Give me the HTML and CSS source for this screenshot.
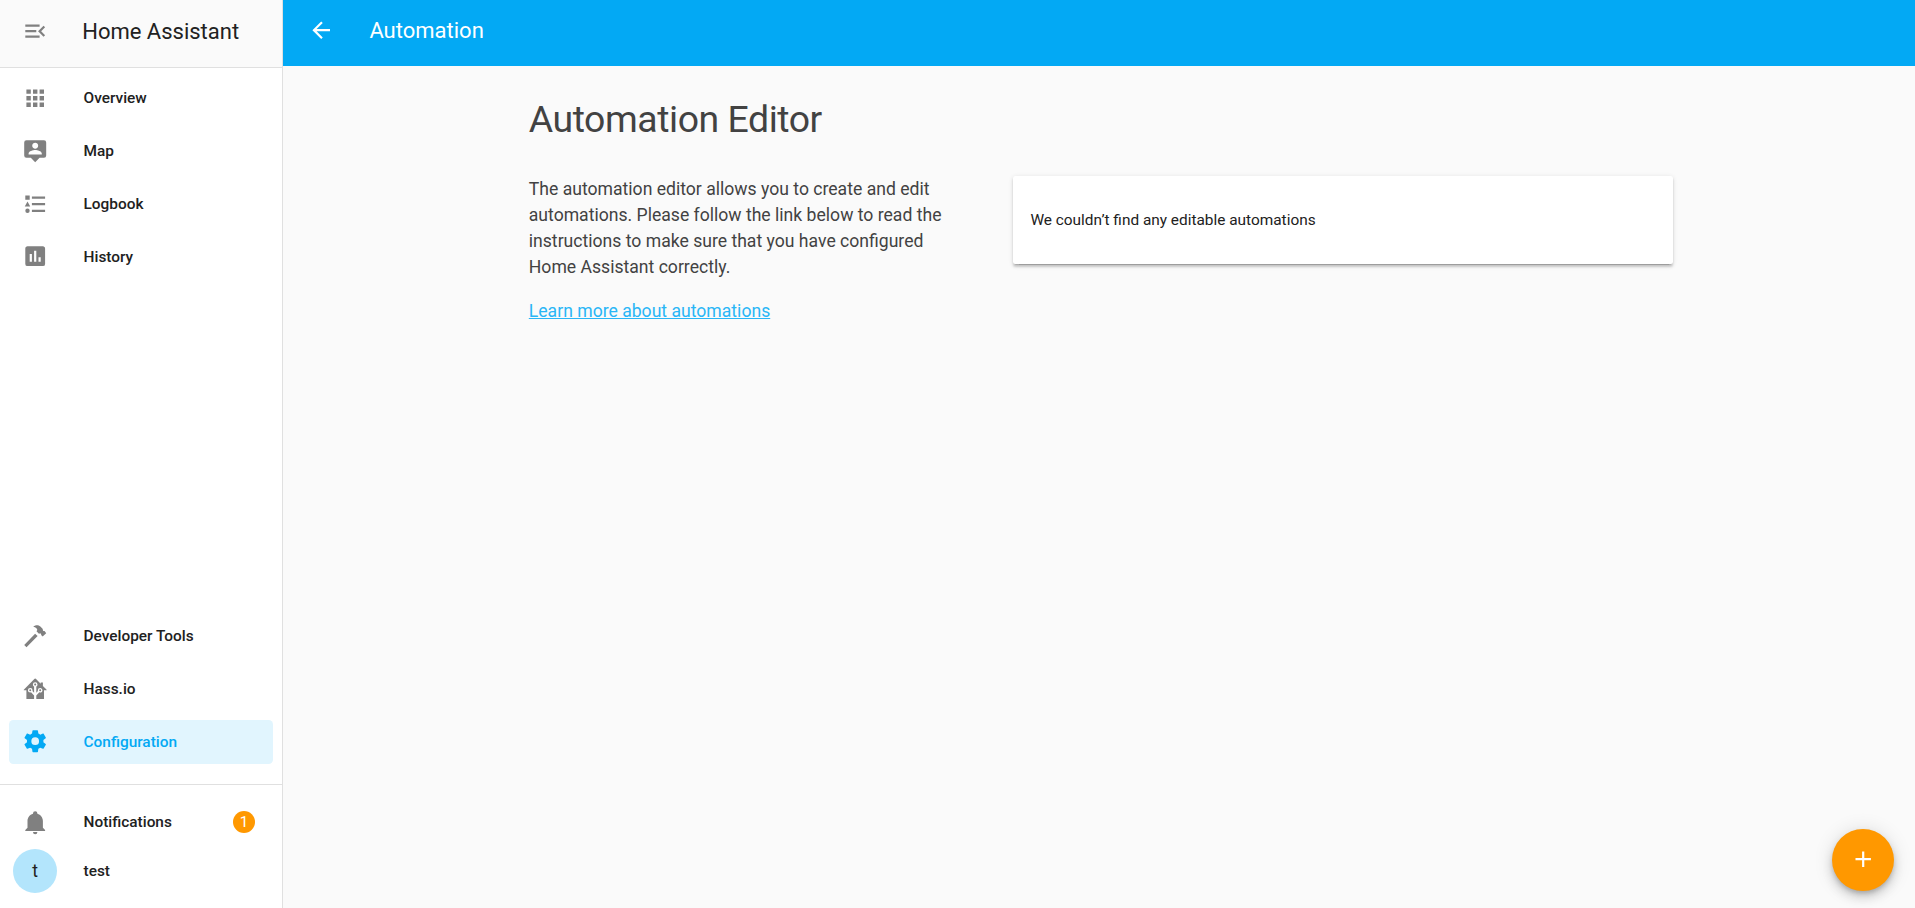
FILE: index.html
```html
<!DOCTYPE html>
<html lang="en">
<head>
<meta charset="utf-8">
<title>Home Assistant</title>
<link rel="stylesheet" href="styles.css">
</head>
<body>
<div class="app">
  <aside class="sidebar">
    <header class="sidebar-header">
      <svg class="icon" viewBox="0 0 24 24"><path d="M3,18H16V16H3V18M3,13H13V11H3V13M3,6V8H16V6H3M21,15.59L17.42,12L21,8.41L19.59,7L14.59,12L19.59,17L21,15.59Z"/></svg>
      <span class="brand">Home Assistant</span>
    </header>
    <nav class="nav">
      <a class="item"><svg class="icon" viewBox="0 0 24 24"><path d="M16,20H20V16H16M16,14H20V10H16M10,8H14V4H10M16,8H20V4H16M10,14H14V10H10M4,14H8V10H4M4,20H8V16H4M10,20H14V16H10M4,8H8V4H4V8Z"/></svg><span>Overview</span></a>
      <a class="item"><svg class="icon" viewBox="0 0 24 24"><path d="M20,2H4A2,2 0 0,0 2,4V16A2,2 0 0,0 4,18H8L12,22L16,18H20A2,2 0 0,0 22,16V4A2,2 0 0,0 20,2M12,4.3C13.5,4.3 14.7,5.5 14.7,7C14.7,8.5 13.5,9.7 12,9.7C10.5,9.7 9.3,8.5 9.3,7C9.3,5.5 10.5,4.3 12,4.3M18,15H6V14.1C6,12.1 10,11 12,11C14,11 18,12.1 18,14.1V15Z"/></svg><span>Map</span></a>
      <a class="item"><svg class="icon" viewBox="0 0 24 24"><path d="M5,9.5L7.5,14H2.5L5,9.5M3,4H7V8H3V4M5,20A2,2 0 0,0 7,18A2,2 0 0,0 5,16A2,2 0 0,0 3,18A2,2 0 0,0 5,20M9,5V7H21V5H9M9,19H21V17H9V19M9,13H21V11H9V13Z"/></svg><span>Logbook</span></a>
      <a class="item"><svg class="icon" viewBox="0 0 24 24"><path d="M17,17H15V13H17M13,17H11V7H13M9,17H7V10H9M19,3H5C3.89,3 3,3.89 3,5V19A2,2 0 0,0 5,21H19A2,2 0 0,0 21,19V5C21,3.89 20.1,3 19,3Z"/></svg><span>History</span></a>
      <div class="spacer"></div>
      <a class="item"><svg class="icon" viewBox="0 0 24 24"><path d="M2,19.9L11.9,9.7L14.2,11.9L4.1,22L2,19.9M10.3,3.4C11.8,1.7 14.9,1.5 16.7,3.2L18.7,5.2C19.1,5.7 18.8,6.6 19.2,7C19.6,7.3 20.3,7.1 20.7,7.5L22,9.3L18.8,12.3L17.6,11.1C17.2,10.6 17.5,10 17.1,9.6C16.7,9.3 16,9.6 15.4,9.8L13.2,7.6L13.9,6.4C13.9,5 12.4,3.8 10.3,3.4Z"/></svg><span>Developer Tools</span></a>
      <a class="item"><svg class="icon" viewBox="0 0 24 24"><path d="M21.8,13H20V21H13V17.67L15.79,14.88L16.5,15C17.66,15 18.6,14.06 18.6,12.9C18.6,11.74 17.66,10.8 16.5,10.8A2.1,2.1 0 0,0 14.4,12.9L14.5,13.61L13,15.13V9.65C13.66,9.29 14.1,8.6 14.1,7.8A2.1,2.1 0 0,0 12,5.7A2.1,2.1 0 0,0 9.9,7.8C9.9,8.6 10.34,9.29 11,9.65V15.13L9.5,13.61L9.6,12.9A2.1,2.1 0 0,0 7.5,10.8A2.1,2.1 0 0,0 5.4,12.9A2.1,2.1 0 0,0 7.5,15L8.21,14.88L11,17.67V21H4V13H2.25C1.83,13 1.42,13 1.42,12.79C1.43,12.57 1.85,12.15 2.28,11.72L11,3C11.33,2.67 11.67,2.33 12,2.33C12.33,2.33 12.67,2.67 13,3L17,7V6H19V9L21.78,11.78C22.18,12.18 22.59,12.59 22.6,12.8C22.6,13 22.2,13 21.8,13M7.5,12A0.9,0.9 0 0,1 8.4,12.9A0.9,0.9 0 0,1 7.5,13.8A0.9,0.9 0 0,1 6.6,12.9A0.9,0.9 0 0,1 7.5,12M16.5,12C17,12 17.4,12.4 17.4,12.9C17.4,13.4 17,13.8 16.5,13.8A0.9,0.9 0 0,1 15.6,12.9A0.9,0.9 0 0,1 16.5,12M12,6.9C12.5,6.9 12.9,7.3 12.9,7.8C12.9,8.3 12.5,8.7 12,8.7C11.5,8.7 11.1,8.3 11.1,7.8C11.1,7.3 11.5,6.9 12,6.9Z"/></svg><span>Hass.io</span></a>
      <a class="item selected"><svg class="icon" viewBox="0 0 24 24"><path d="M12,15.5A3.5,3.5 0 0,1 8.5,12A3.5,3.5 0 0,1 12,8.5A3.5,3.5 0 0,1 15.5,12A3.5,3.5 0 0,1 12,15.5M19.43,12.97C19.47,12.65 19.5,12.33 19.5,12C19.5,11.67 19.47,11.34 19.43,11L21.54,9.37C21.73,9.22 21.78,8.95 21.66,8.73L19.66,5.27C19.54,5.05 19.27,4.96 19.05,5.05L16.56,6.05C16.04,5.66 15.5,5.32 14.87,5.07L14.5,2.42C14.46,2.18 14.25,2 14,2H10C9.75,2 9.54,2.18 9.5,2.42L9.13,5.07C8.5,5.32 7.96,5.66 7.44,6.05L4.95,5.05C4.73,4.96 4.46,5.05 4.34,5.27L2.34,8.73C2.21,8.95 2.27,9.22 2.46,9.37L4.57,11C4.53,11.34 4.5,11.67 4.5,12C4.5,12.33 4.53,12.65 4.57,12.97L2.46,14.63C2.27,14.78 2.21,15.05 2.34,15.27L4.34,18.73C4.46,18.95 4.73,19.03 4.95,18.95L7.44,17.94C7.96,18.34 8.5,18.68 9.13,18.93L9.5,21.58C9.54,21.82 9.75,22 10,22H14C14.25,22 14.46,21.82 14.5,21.58L14.87,18.93C15.5,18.67 16.04,18.34 16.56,17.94L19.05,18.95C19.27,19.03 19.54,18.95 19.66,18.73L21.66,15.27C21.78,15.05 21.73,14.78 21.54,14.63L19.43,12.97Z"/></svg><span>Configuration</span></a>
    </nav>
    <footer class="sidebar-footer">
      <a class="item"><svg class="icon" viewBox="0 0 24 24"><path d="M21,19V20H3V19L5,17V11C5,7.9 7.03,5.17 10,4.29C10,4.19 10,4.1 10,4A2,2 0 0,1 12,2A2,2 0 0,1 14,4C14,4.1 14,4.19 14,4.29C16.97,5.17 19,7.9 19,11V17L21,19M14,21A2,2 0 0,1 12,23A2,2 0 0,1 10,21"/></svg><span>Notifications</span><span class="badge">1</span></a>
      <a class="item profile"><span class="avatar">t</span><span>test</span></a>
    </footer>
  </aside>
  <main class="main">
    <header class="toolbar">
      <svg class="icon" viewBox="0 0 24 24"><path d="M20 11H7.83l5.59-5.59L12 4l-8 8 8 8 1.41-1.41L7.83 13H20v-2z"/></svg>
      <span>Automation</span>
    </header>
    <section class="content">
      <h1 class="title">Automation Editor</h1>
      <div class="columns">
        <div class="intro">
          <p>The automation editor allows you to create and edit automations. Please follow the link below to read the instructions to make sure that you have configured Home Assistant correctly.</p>
          <a class="link">Learn more about automations</a>
        </div>
        <div class="card">We couldn’t find any editable automations</div>
      </div>
    </section>
  </main>
  <button class="fab"><svg class="icon" viewBox="0 0 24 24"><path d="M19,13H13V19H11V13H5V11H11V5H13V11H19V13Z"/></svg></button>
</div>
</body>
</html>
```

FILE: styles.css
```css
* { box-sizing: border-box; }

body {
  margin: 0;
  font-family: Roboto, "Noto Sans", sans-serif;
  color: #212121;
  background: #fafafa;
  -webkit-font-smoothing: antialiased;
}

.app { display: flex; height: 100vh; overflow: hidden; }

.icon { width: 26.4px; height: 26.4px; flex: none; fill: currentColor; display: block; }

.sidebar {
  width: 283px;
  flex: none;
  display: flex;
  flex-direction: column;
  background: #fff;
  border-right: 1px solid #e0e0e0;
}

.sidebar-header {
  height: 68px;
  flex: none;
  display: flex;
  align-items: center;
  padding: 0 0 5px 21.8px;
  background: #fafafa;
  border-bottom: 1px solid #e0e0e0;
}
.sidebar-header .icon { color: #808080; }
.brand { margin-left: 34px; font-size: 22px; }

.nav {
  flex: 1;
  display: flex;
  flex-direction: column;
  gap: 8.8px;
  padding: 8.2px 8.8px 20.4px;
}
.spacer { flex: 1; }

.item {
  height: 44px;
  flex: none;
  display: flex;
  align-items: center;
  padding: 0 18.2px 0 13.2px;
  border-radius: 4.4px;
  font-size: 15.4px;
  font-weight: 500;
}
.item .icon { margin-right: 35.2px; color: #808080; }
.item.selected { background: #e1f5fe; color: #03a9f4; }
.item.selected .icon { color: #03a9f4; }

.sidebar-footer {
  height: 124px;
  flex: none;
  padding: 14.8px 8.8px 0;
  border-top: 1px solid #e0e0e0;
}

.badge {
  width: 22px;
  height: 22px;
  margin-left: auto;
  border-radius: 50%;
  background: #ff9800;
  color: #fff;
  font-weight: 400;
  line-height: 22px;
  text-align: center;
}

.profile { margin-top: 4.8px; padding-left: 4.4px; }
.avatar {
  width: 44px;
  height: 44px;
  margin-right: 26.4px;
  border-radius: 50%;
  background: #b3e5fc;
  font-size: 17.6px;
  font-weight: 400;
  line-height: 44px;
  text-align: center;
}

.main { flex: 1; }

.toolbar {
  height: 66px;
  display: flex;
  align-items: center;
  padding: 0 0 5px 25px;
  background: #03a9f4;
  color: #fff;
  font-size: 22px;
}
.toolbar .icon { margin-right: 35px; }

.content {
  width: 1144px;
  margin-left: 245.8px;
  padding-top: 31px;
  color: #424242;
}
.title {
  margin: 0;
  font-size: 37.4px;
  font-weight: 400;
  line-height: 44px;
  letter-spacing: -.012em;
}
.columns { display: flex; justify-content: space-between; margin-top: 35px; }
.intro { width: 440px; font-size: 17.6px; line-height: 26px; }
.intro p { margin: 0 0 18px; }
.link { color: #29b6f6; text-decoration: underline; }

.card {
  width: 660px;
  height: 88px;
  padding: 0 17.6px;
  border-radius: 2.2px;
  background: #fff;
  color: #212121;
  font-size: 15.4px;
  line-height: 88px;
  box-shadow: 0 2.2px 2.2px rgba(0, 0, 0, .14), 0 1.1px 5.5px rgba(0, 0, 0, .12), 0 3.3px 1.1px -2.2px rgba(0, 0, 0, .2);
}

/* Floats over the page content */
.fab {
  position: absolute;
  right: 21px;
  bottom: 17.5px;
  width: 62px;
  height: 62px;
  padding: 0;
  display: grid;
  place-items: center;
  border: 0;
  border-radius: 50%;
  background: #ff9800;
  color: #fff;
  box-shadow: 0 3.3px 5.5px -1px rgba(0, 0, 0, .2), 0 6.6px 11px rgba(0, 0, 0, .14), 0 1.1px 19.8px rgba(0, 0, 0, .12);
}
```
